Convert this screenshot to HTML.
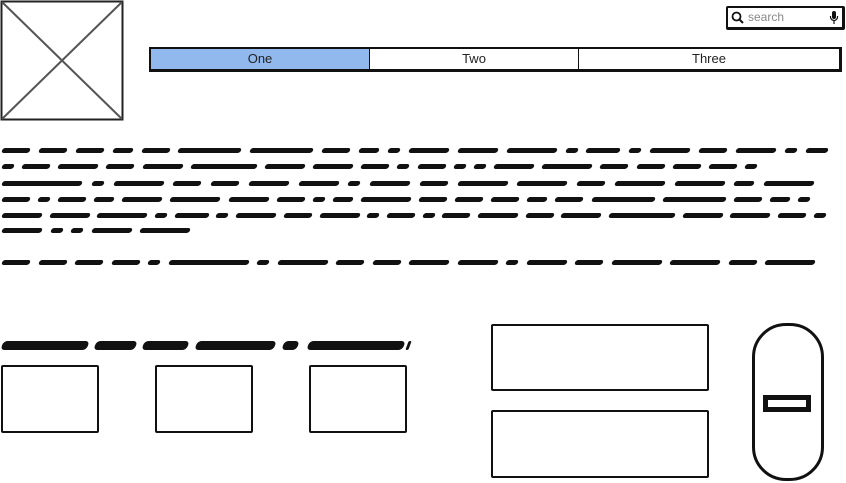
<!DOCTYPE html>
<html><head><meta charset="utf-8"><style>
*{margin:0;padding:0;box-sizing:border-box}
body{width:846px;height:483px;background:#fff;position:relative;overflow:hidden;font-family:"Liberation Sans",sans-serif}
.a{position:absolute}
.box{position:absolute;border:2px solid #111;border-radius:2px;background:#fff}
.ln{position:absolute;left:2px;display:flex;justify-content:space-between;height:5px}
.ln span{display:block;height:5px;background:#111;border-radius:3px;transform:skewX(-20deg)}
.hd{position:absolute;left:2px;top:341px;height:9px}
.hd span{position:absolute;top:0;height:9px;background:#111;border-radius:4px;transform:skewX(-20deg)}
</style></head><body>
<svg class="a" style="left:0;top:0" width="125" height="122">
<rect x="1.5" y="1.5" width="121" height="118" fill="#fff" stroke="#222" stroke-width="2"/>
<line x1="2" y1="2" x2="122" y2="119" stroke="#555" stroke-width="2"/>
<line x1="122" y1="2" x2="2" y2="119" stroke="#555" stroke-width="2"/>
</svg>
<div class="box" style="left:726px;top:6px;width:119px;height:24px;border-right-width:3px;border-bottom-width:3px"></div>
<svg class="a" style="left:731px;top:11px" width="14" height="14"><circle cx="5.5" cy="5.5" r="4" fill="none" stroke="#111" stroke-width="1.8"/><line x1="8.5" y1="8.5" x2="12" y2="12" stroke="#111" stroke-width="2"/></svg>
<div class="a" style="left:748px;top:10px;font-size:12px;color:#888">search</div>
<svg class="a" style="left:829px;top:11px" width="10" height="14"><rect x="3" y="0" width="4" height="8" rx="2" fill="#111"/><path d="M1.5 5v1a3.5 3.5 0 0 0 7 0V5M5 10v3" stroke="#111" fill="none" stroke-width="1.2"/></svg>
<div class="a" style="left:149px;top:47px;width:693px;height:25px;border:2px solid #111;border-right-width:3px;border-bottom-width:3px;display:flex;font-size:13px;color:#222">
<div style="width:219px;background:#92b9ee;border-right:1.5px solid #111;text-align:center;line-height:20px">One</div>
<div style="width:209px;border-right:1.5px solid #111;text-align:center;line-height:20px">Two</div>
<div style="flex:1;text-align:center;line-height:20px">Three</div>
</div>
<div class="ln" style="top:148px;width:826px"><span style="width:28px"></span><span style="width:28px"></span><span style="width:28px"></span><span style="width:20px"></span><span style="width:28px"></span><span style="width:63px"></span><span style="width:63px"></span><span style="width:28px"></span><span style="width:20px"></span><span style="width:12px"></span><span style="width:40px"></span><span style="width:40px"></span><span style="width:50px"></span><span style="width:12px"></span><span style="width:34px"></span><span style="width:12px"></span><span style="width:40px"></span><span style="width:28px"></span><span style="width:40px"></span><span style="width:12px"></span><span style="width:22px"></span></div>
<div class="ln" style="top:164px;width:755px"><span style="width:12px"></span><span style="width:28px"></span><span style="width:40px"></span><span style="width:28px"></span><span style="width:40px"></span><span style="width:66px"></span><span style="width:40px"></span><span style="width:40px"></span><span style="width:28px"></span><span style="width:12px"></span><span style="width:28px"></span><span style="width:12px"></span><span style="width:12px"></span><span style="width:40px"></span><span style="width:50px"></span><span style="width:28px"></span><span style="width:28px"></span><span style="width:28px"></span><span style="width:28px"></span><span style="width:12px"></span></div>
<div class="ln" style="top:181px;width:812px"><span style="width:80px"></span><span style="width:12px"></span><span style="width:50px"></span><span style="width:28px"></span><span style="width:28px"></span><span style="width:40px"></span><span style="width:40px"></span><span style="width:12px"></span><span style="width:40px"></span><span style="width:28px"></span><span style="width:50px"></span><span style="width:50px"></span><span style="width:28px"></span><span style="width:50px"></span><span style="width:50px"></span><span style="width:20px"></span><span style="width:50px"></span></div>
<div class="ln" style="top:197px;width:808px"><span style="width:28px"></span><span style="width:12px"></span><span style="width:28px"></span><span style="width:20px"></span><span style="width:40px"></span><span style="width:50px"></span><span style="width:40px"></span><span style="width:28px"></span><span style="width:12px"></span><span style="width:20px"></span><span style="width:50px"></span><span style="width:28px"></span><span style="width:28px"></span><span style="width:28px"></span><span style="width:20px"></span><span style="width:28px"></span><span style="width:63px"></span><span style="width:63px"></span><span style="width:28px"></span><span style="width:20px"></span><span style="width:12px"></span></div>
<div class="ln" style="top:213px;width:824px"><span style="width:40px"></span><span style="width:40px"></span><span style="width:50px"></span><span style="width:12px"></span><span style="width:34px"></span><span style="width:12px"></span><span style="width:40px"></span><span style="width:28px"></span><span style="width:40px"></span><span style="width:12px"></span><span style="width:28px"></span><span style="width:12px"></span><span style="width:28px"></span><span style="width:40px"></span><span style="width:28px"></span><span style="width:40px"></span><span style="width:66px"></span><span style="width:40px"></span><span style="width:40px"></span><span style="width:28px"></span><span style="width:12px"></span></div>
<div class="ln" style="top:228px;width:188px"><span style="width:40px"></span><span style="width:12px"></span><span style="width:12px"></span><span style="width:40px"></span><span style="width:50px"></span></div>
<div class="ln" style="top:260px;width:813px"><span style="width:28px"></span><span style="width:28px"></span><span style="width:28px"></span><span style="width:28px"></span><span style="width:12px"></span><span style="width:80px"></span><span style="width:12px"></span><span style="width:50px"></span><span style="width:28px"></span><span style="width:28px"></span><span style="width:40px"></span><span style="width:40px"></span><span style="width:12px"></span><span style="width:40px"></span><span style="width:28px"></span><span style="width:50px"></span><span style="width:50px"></span><span style="width:28px"></span><span style="width:50px"></span></div>
<div class="hd"><span style="left:0;width:86px"></span><span style="left:93px;width:41px"></span><span style="left:141px;width:45px"></span><span style="left:194px;width:79px"></span><span style="left:281px;width:15px"></span><span style="left:306px;width:96px"></span><span style="left:405px;width:3px"></span></div>
<div class="box" style="left:1px;top:365px;width:98px;height:68px"></div>
<div class="box" style="left:155px;top:365px;width:98px;height:68px"></div>
<div class="box" style="left:309px;top:365px;width:98px;height:68px"></div>
<div class="box" style="left:491px;top:324px;width:218px;height:67px"></div>
<div class="box" style="left:491px;top:410px;width:218px;height:68px"></div>
<div class="a" style="left:752px;top:323px;width:72px;height:158px;border:3px solid #111;border-radius:34px"></div>
<div class="a" style="left:763px;top:395px;width:48px;height:17px;border:5px solid #111"></div>
</body></html>
